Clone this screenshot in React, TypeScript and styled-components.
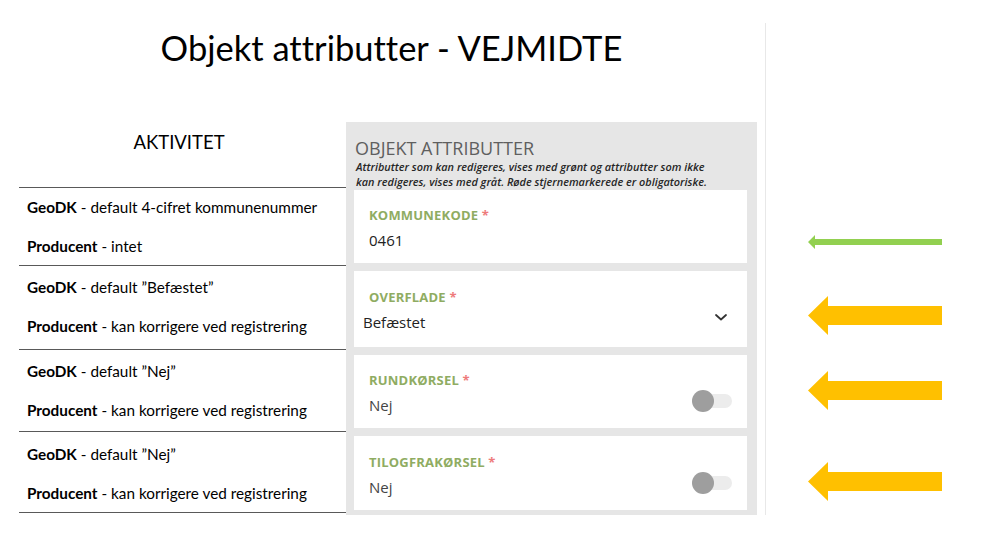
import React from 'react';
import styled, { createGlobalStyle } from 'styled-components';

const GlobalStyle = createGlobalStyle`
  html, body {
    margin: 0;
    padding: 0;
    background: #ffffff;
  }
  body {
    font-family: "Lato", "Open Sans", sans-serif;
    font-variant-ligatures: none;
    color: #000;
  }
`;

interface Activity {
    geo: string;
    producent: string;
    height: number;
    top: number;
}

const activities: Activity[] = [
    { geo: 'default 4-cifret kommunenummer', producent: 'intet', height: 77, top: 9 },
    { geo: 'default \u201dBefæstet\u201d', producent: 'kan korrigere ved registrering', height: 83, top: 11 },
    { geo: 'default \u201dNej\u201d', producent: 'kan korrigere ved registrering', height: 81, top: 11 },
    { geo: 'default \u201dNej\u201d', producent: 'kan korrigere ved registrering', height: 80, top: 12 },
];

export default function App() {
    return (
        <>
            <GlobalStyle />
            <Page>
                <Main>
                    <Title>Objekt attributter - VEJMIDTE</Title>
                    <Columns>
                        <ActivityTable>
                            <ActivityHead>AKTIVITET</ActivityHead>
                            {activities.map((a, i) => (
                                <ActivityRow key={i} rowHeight={a.height} padTop={a.top}>
                                    <ActivityLine><b>GeoDK</b> - {a.geo}</ActivityLine>
                                    <ActivityLine><b>Producent</b> - {a.producent}</ActivityLine>
                                </ActivityRow>
                            ))}
                        </ActivityTable>

                        <Panel>
                            <PanelHead>
                                <PanelTitle>OBJEKT ATTRIBUTTER</PanelTitle>
                                <PanelNote>
                                    Attributter som kan redigeres, vises med grønt og attributter som ikke
                                    <br />
                                    kan redigeres, vises med gråt. Røde stjernemarkerede er obligatoriske.
                                </PanelNote>
                            </PanelHead>

                            <Card cardHeight={73} padTop={17}>
                                <FieldLabel>KOMMUNEKODE <Required>*</Required></FieldLabel>
                                <ValueRow>
                                    <FieldValue>0461</FieldValue>
                                </ValueRow>
                            </Card>

                            <Card cardHeight={76} padTop={18}>
                                <FieldLabel>OVERFLADE <Required>*</Required></FieldLabel>
                                <ValueRow>
                                    <FieldValue select>Befæstet</FieldValue>
                                    <Chevron viewBox="0 0 12 7" width="12" height="7">
                                        <path d="M1 1 L6 5.5 L11 1" fill="none" stroke="#333" strokeWidth="1.8" strokeLinecap="round" strokeLinejoin="round" />
                                    </Chevron>
                                </ValueRow>
                            </Card>

                            <Card cardHeight={73} padTop={17}>
                                <FieldLabel>RUNDKØRSEL <Required>*</Required></FieldLabel>
                                <ValueRow>
                                    <FieldValue muted>Nej</FieldValue>
                                    <Toggle><Knob /></Toggle>
                                </ValueRow>
                            </Card>

                            <Card cardHeight={74} padTop={18}>
                                <FieldLabel>TILOGFRAKØRSEL <Required>*</Required></FieldLabel>
                                <ValueRow>
                                    <FieldValue muted>Nej</FieldValue>
                                    <Toggle><Knob /></Toggle>
                                </ValueRow>
                            </Card>
                        </Panel>
                    </Columns>
                </Main>

                <Arrows>
                    <ArrowSvg width="134" height="14" viewBox="0 0 134 14" offset={0}>
                        <polygon points="0,7 7,0 7,4 134,4 134,10 7,10 7,14" fill="#92d050" />
                    </ArrowSvg>
                    <ArrowSvg width="134" height="39" viewBox="0 0 134 39" offset={47}>
                        <polygon points="0,19.5 20,0 20,10 134,10 134,29 20,29 20,39" fill="#ffc000" />
                    </ArrowSvg>
                    <ArrowSvg width="134" height="39" viewBox="0 0 134 39" offset={36}>
                        <polygon points="0,19.5 20,0 20,10 134,10 134,29 20,29 20,39" fill="#ffc000" />
                    </ArrowSvg>
                    <ArrowSvg width="134" height="39" viewBox="0 0 134 39" offset={52}>
                        <polygon points="0,19.5 20,0 20,10 134,10 134,29 20,29 20,39" fill="#ffc000" />
                    </ArrowSvg>
                </Arrows>
            </Page>
        </>
    );
}

const Page = styled.div`
  display: flex;
  align-items: flex-start;
  width: 1004px;
  height: 552px;
  padding-left: 19px;
  box-sizing: border-box;
  overflow: hidden;
`;

const Main = styled.div`
  width: 747px;
  margin-top: 23px;
  height: 492px;
  box-sizing: border-box;
  border-right: 1px solid #e8e8e8;
  display: flex;
  flex-direction: column;
`;

const Title = styled.h1`
  margin: 0;
  padding-top: 5px;
  padding-right: 1px;
  height: 99px;
  box-sizing: border-box;
  text-align: center;
  font-family: "Lato", sans-serif;
  font-weight: 400;
  font-size: 34.5px;
  line-height: 40px;
  color: #000;
`;

const Columns = styled.div`
  display: flex;
  align-items: flex-start;
`;

const ActivityTable = styled.div`
  width: 328px;
  display: flex;
  flex-direction: column;
`;

const ActivityHead = styled.div`
  height: 66px;
  box-sizing: border-box;
  padding-top: 8px;
  padding-right: 8px;
  border-bottom: 1px solid #595959;
  text-align: center;
  font-size: 18.5px;
  line-height: 24px;
  color: #000;
`;

const ActivityRow = styled.div<{ rowHeight: number; padTop: number }>`
  height: ${({ rowHeight }) => rowHeight + 1}px;
  box-sizing: border-box;
  padding: ${({ padTop }) => padTop}px 0 0 8px;
  border-bottom: 1px solid #595959;
  display: flex;
  flex-direction: column;
  gap: 19px;
`;

const ActivityLine = styled.div`
  font-size: 15.3px;
  line-height: 20px;
  color: #000;

  b {
    font-weight: 700;
  }
`;

const Panel = styled.div`
  width: 411px;
  margin-left: -1px;
  background: #e6e6e6;
  box-sizing: border-box;
  padding: 0 10px 5px 8px;
  display: flex;
  flex-direction: column;
  gap: 8px;
`;

const PanelHead = styled.div`
  height: 68px;
  box-sizing: border-box;
  padding-top: 15px;
  margin-bottom: -8px;
  font-family: "Open Sans", sans-serif;
`;

const PanelTitle = styled.div`
  font-size: 18px;
  line-height: 22px;
  color: #5f5f5f;
  padding-left: 1px;
`;

const PanelNote = styled.div`
  font-size: 10.9px;
  font-style: italic;
  font-weight: 600;
  line-height: 15px;
  color: #262626;
  padding-left: 2px;
  white-space: nowrap;
`;

const Card = styled.div<{ cardHeight: number; padTop: number }>`
  height: ${({ cardHeight }) => cardHeight}px;
  box-sizing: border-box;
  background: #ffffff;
  padding: ${({ padTop }) => padTop}px 15px 0 15px;
  font-family: "Open Sans", sans-serif;
`;

const FieldLabel = styled.div`
  font-size: 13px;
  font-weight: 700;
  line-height: 16px;
  color: #8fac62;
  letter-spacing: 0.2px;
`;

const Required = styled.span`
  color: #ee7b7b;
`;

const ValueRow = styled.div`
  margin-top: 7px;
  display: flex;
  align-items: center;
  justify-content: space-between;
  height: 20px;
`;

const FieldValue = styled.div<{ select?: boolean; muted?: boolean }>`
  font-size: 15px;
  line-height: 20px;
  color: ${({ muted }) => (muted ? '#444' : '#222')};
  margin-left: ${({ select }) => (select ? '-6px' : '0')};
`;

const Chevron = styled.svg`
  display: block;
  margin-right: 5px;
  margin-bottom: 9px;
`;

const Toggle = styled.div`
  width: 40px;
  height: 22px;
  margin-bottom: 9px;
  display: flex;
  align-items: center;
  justify-content: flex-end;
  position: relative;

  &::before {
    content: '';
    width: 34px;
    height: 14px;
    border-radius: 7px;
    background: #ececec;
  }
`;

const Knob = styled.span`
  position: absolute;
  left: 0;
  top: 0;
  width: 22px;
  height: 22px;
  border-radius: 50%;
  background: #9e9e9e;
`;

const Arrows = styled.div`
  margin-left: 42px;
  padding-top: 235px;
  display: flex;
  flex-direction: column;
`;

const ArrowSvg = styled.svg<{ offset: number }>`
  display: block;
  margin-top: ${({ offset }) => offset}px;
`;
